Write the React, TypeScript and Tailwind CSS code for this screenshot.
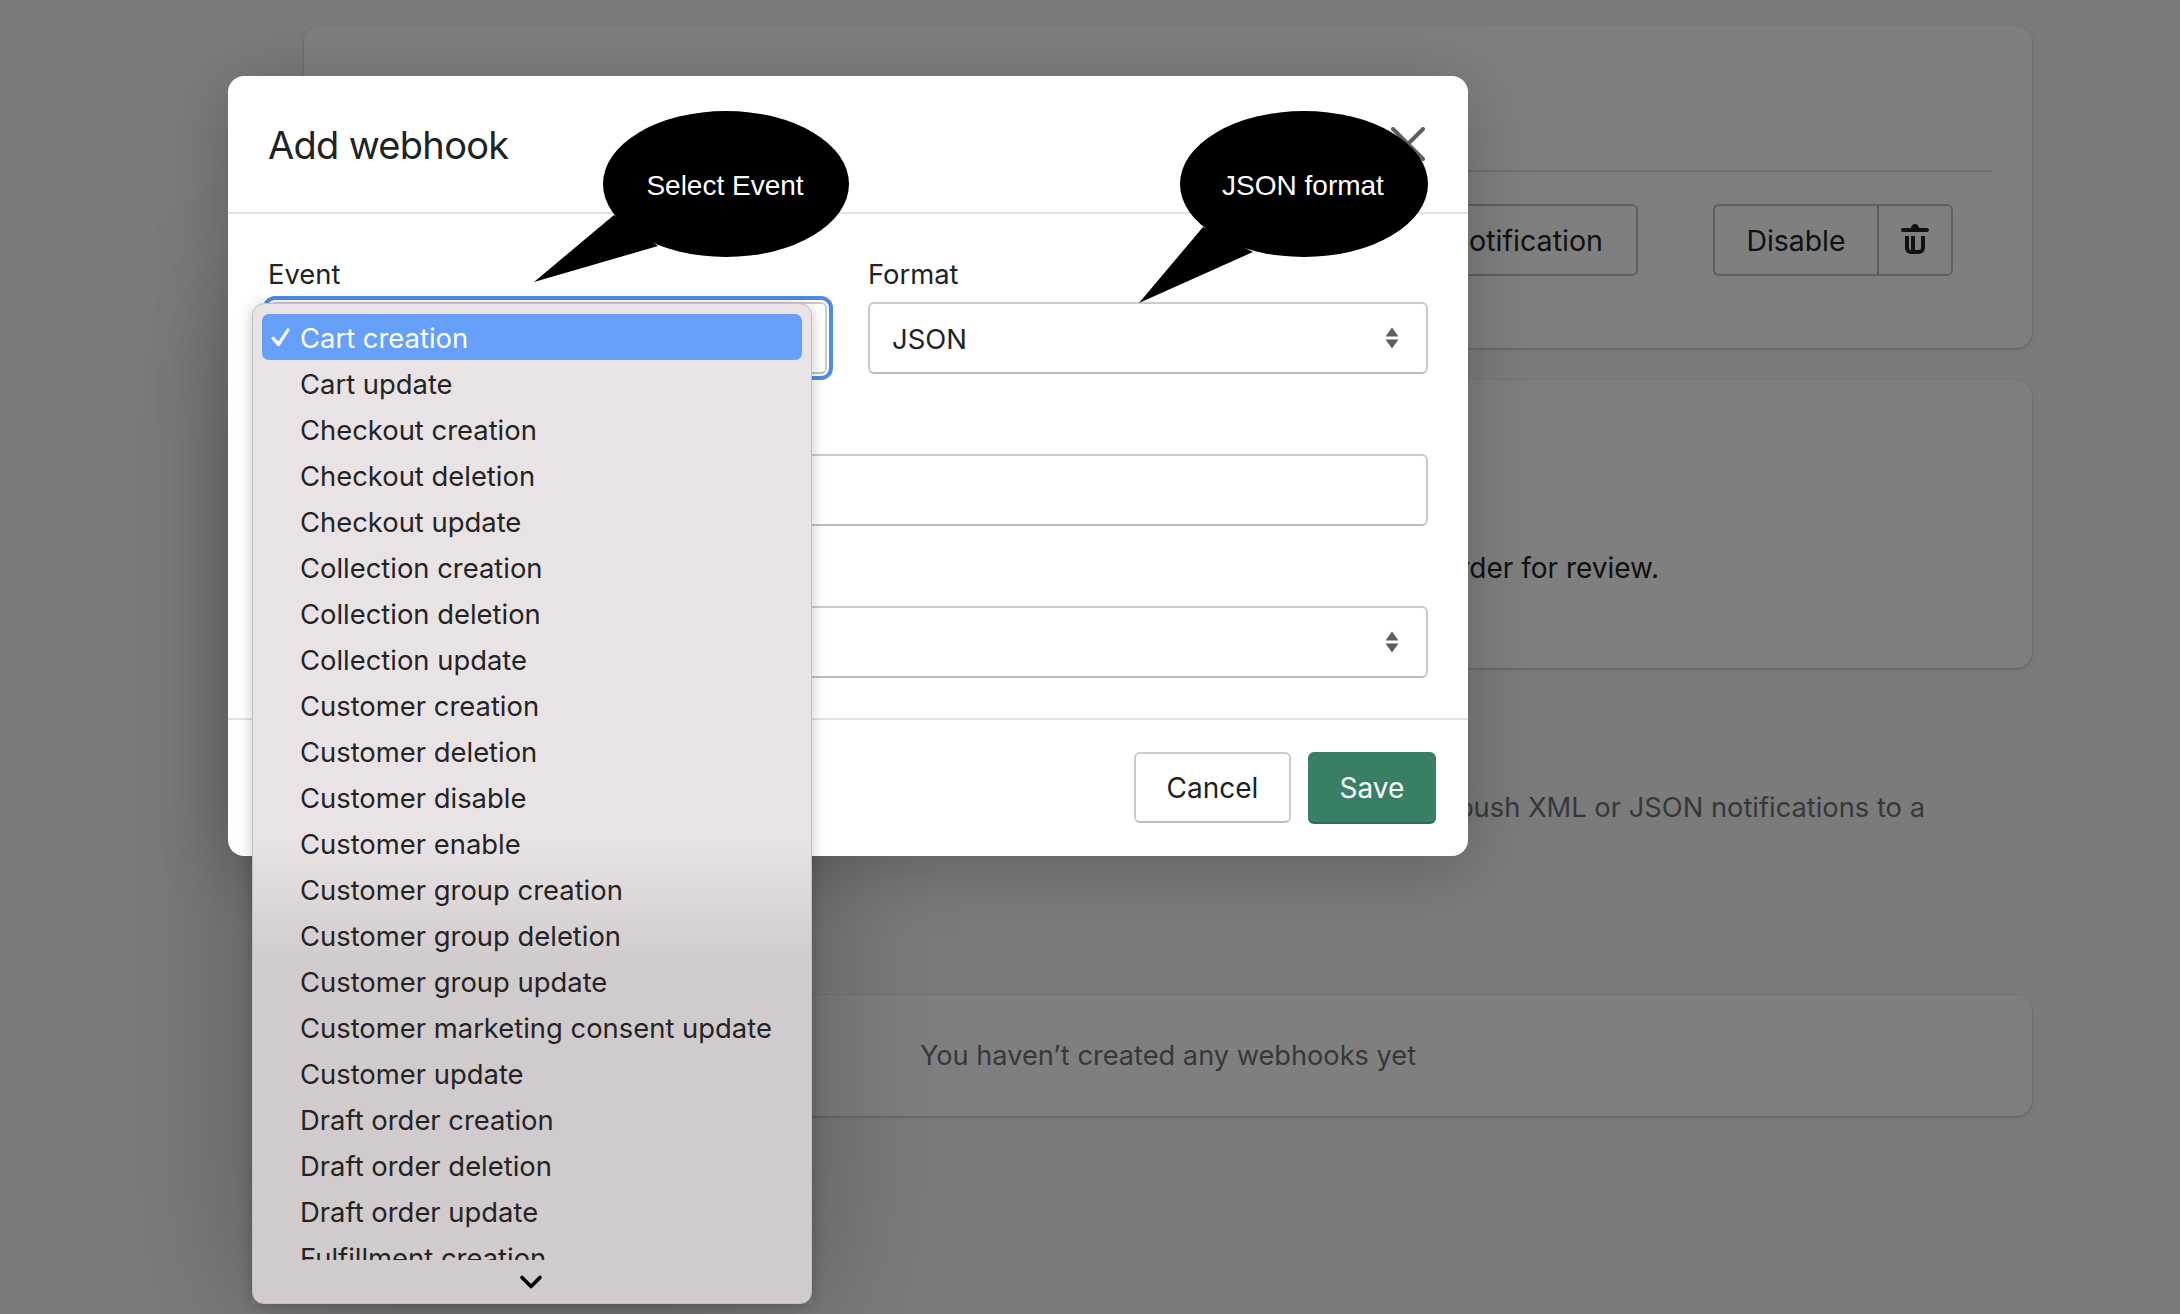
import { ChevronDown } from "lucide-react";

const events = [
  "Cart update",
  "Checkout creation",
  "Checkout deletion",
  "Checkout update",
  "Collection creation",
  "Collection deletion",
  "Collection update",
  "Customer creation",
  "Customer deletion",
  "Customer disable",
  "Customer enable",
  "Customer group creation",
  "Customer group deletion",
  "Customer group update",
  "Customer marketing consent update",
  "Customer update",
  "Draft order creation",
  "Draft order deletion",
  "Draft order update",
  "Fulfillment creation",
];

const fieldClass =
  "flex h-[72px] items-center justify-between rounded-[6px] border-2 border-[#c9cccf] border-b-[#babfc3] bg-white pl-[22px] pr-[27px] pt-[3px] text-[27.4px] text-[#202223]";

function UpDownCaret() {
  return (
    <svg width="14" height="22" viewBox="0 0 14 22" fill="#5c5f62" className="-mt-[3px]">
      <path d="M7 0.5 13.5 9.5H0.5Z" />
      <path d="M7 21.5 0.5 12.5H13.5Z" />
    </svg>
  );
}

function Label({ children }: { children: string }) {
  return (
    <p className="mb-[12px] h-[32px] text-[27.4px] leading-[32px] text-[#202223]">{children}</p>
  );
}

function Callout({
  className,
  text,
  ellipse,
  tail,
  width,
  height,
  textLeft,
}: {
  className: string;
  text: string;
  ellipse: { cx: number; cy: number; rx: number; ry: number };
  tail: string;
  width: number;
  height: number;
  textLeft: string;
}) {
  return (
    <div className={className}>
      <svg width={width} height={height} viewBox={`0 0 ${width} ${height}`} fill="#000">
        <ellipse {...ellipse} />
        <polygon points={tail} />
      </svg>
      <span
        className={`absolute top-[57px] -translate-x-1/2 whitespace-nowrap text-[28px] leading-[36px] text-white [font-family:'Liberation_Sans',sans-serif] ${textLeft}`}
      >
        {text}
      </span>
    </div>
  );
}

export default function App() {
  return (
    <div className="relative h-[1314px] overflow-hidden bg-[#f6f6f7] [font-family:Inter,sans-serif]">
      {/* page behind the modal */}
      <div className="ml-[304px] flex w-[1728px] flex-col pt-[26px]">
        <section className="h-[322px] rounded-[16px] bg-white px-[40px] pt-[144px] shadow-[0_1px_3px_rgba(0,0,0,0.25)]">
          <div className="border-t-2 border-[#e1e3e5]" />
          <div className="mt-[32px] flex justify-end gap-[75px] pr-[39px]">
            <div className="flex h-[72px] items-center rounded-[6px] border-2 border-[#babfc3] bg-white px-[33px] pt-[2px] text-[28.6px] text-[#202223]">
              Send test notification
            </div>
            <div className="flex h-[72px] rounded-[6px] border-2 border-[#babfc3] bg-white text-[28.4px] text-[#202223]">
              <div className="flex w-[164px] items-center justify-center border-r-2 border-[#babfc3] pt-[2px]">
                Disable
              </div>
              <div className="flex w-[72px] items-center justify-center">
                <svg width="40" height="40" viewBox="0 0 20 20" fill="#202223">
                  <path d="M8 3.994c0-1.101.895-1.994 2-1.994s2 .893 2 1.994h4c.552 0 1 .446 1 .997a1 1 0 0 1-1 .997h-12c-.552 0-1-.447-1-.997s.448-.997 1-.997h4zm-3 10.014v-6.01h2v6.01c0 .552.448 1 1 1v-7.01h2v7.01h2v-7.01h0v7.01c.552 0 1-.448 1-1v-6.01h2v6.01a3 3 0 0 1-3 3h-4a3 3 0 0 1-3-3z" />
                </svg>
              </div>
            </div>
          </div>
        </section>

        <section className="mt-[32px] flex h-[288px] justify-end rounded-[16px] bg-white pr-[373px] pt-[170px] shadow-[0_1px_3px_rgba(0,0,0,0.25)]">
          <p className="text-[28px] leading-[36px] text-[#202223]">order for review.</p>
        </section>

        <p className="mt-[122px] pr-[107px] text-right text-[27.3px] leading-[36px] text-[#6d7175]">
          push XML or JSON notifications to a
        </p>

        <section className="mt-[169px] flex h-[121px] items-center justify-center rounded-[16px] bg-white pt-[2px] shadow-[0_1px_3px_rgba(0,0,0,0.25)]">
          <p className="text-[27.2px] text-[#6d7175]">You haven’t created any webhooks yet</p>
        </section>
      </div>

      {/* backdrop */}
      <div className="absolute inset-0 bg-black/50" />
      <div className="absolute left-[252px] top-[303px] h-[1001px] w-[560px] shadow-[0_0_130px_rgba(0,0,0,0.28)]" />

      {/* modal */}
      <div className="absolute left-[228px] top-[76px] flex h-[780px] w-[1240px] flex-col rounded-[16px] bg-white shadow-[0_10px_70px_rgba(0,0,0,0.22)]">
        <header className="flex h-[138px] items-center justify-between border-b-2 border-[#e1e3e5] pl-[40px] pr-[43px]">
          <h2 className="mt-[3px] text-[38px] font-normal tracking-[-0.7px] text-[#202223]">Add webhook</h2>
          <svg width="34" height="34" viewBox="0 0 34 34" stroke="#5c5f62" strokeWidth="4" strokeLinecap="round">
            <path d="M2 2 32 32M32 2 2 32" />
          </svg>
        </header>

        <div className="flex h-[504px] flex-col pl-[41px] pr-[40px] pt-[44px]">
          <div className="grid grid-cols-[560px_1fr] gap-[39px]">
            <div>
              <div className="-ml-[1px]">
                <Label>Event</Label>
              </div>
              <div className={`${fieldClass} mr-[2px] outline-[4px] outline-offset-[2px] outline-[#4f8ae8]`} />
            </div>
            <div>
              <Label>Format</Label>
              <div className={fieldClass}>
                JSON
                <UpDownCaret />
              </div>
            </div>
          </div>
          <div className={`${fieldClass} mt-[80px]`} />
          <div className={`${fieldClass} mt-[80px]`}>
            <span />
            <UpDownCaret />
          </div>
        </div>

        <footer className="flex flex-1 items-start justify-end gap-[17px] border-t-2 border-[#e1e3e5] pr-[32px] pt-[32px]">
          <button className="flex h-[71px] w-[157px] items-center justify-center rounded-[6px] border-2 border-[#c9cccf] border-b-[#babfc3] bg-white pt-[1px] text-[28px] text-[#202223]">
            Cancel
          </button>
          <button className="flex h-[72px] w-[128px] items-center justify-center rounded-[6px] border-b-2 border-[#2f6b55] bg-[#387f63] pt-[1px] text-[28px] text-white">
            Save
          </button>
        </footer>
      </div>

      <Callout
        className="absolute left-[530px] top-[111px]"
        text="Select Event"
        ellipse={{ cx: 196, cy: 73, rx: 123, ry: 73 }}
        tail="4,171 84,104 128,135"
        width={320}
        height={172}
        textLeft="left-[195px]"
      />
      <Callout
        className="absolute left-[1135px] top-[111px]"
        text="JSON format"
        ellipse={{ cx: 169, cy: 73, rx: 124, ry: 73 }}
        tail="4,192 68,116 118,141"
        width={294}
        height={193}
        textLeft="left-[168px]"
      />

      {/* native select popup */}
      <div className="absolute left-[252px] top-[303px] flex h-[1001px] w-[560px] flex-col rounded-[12px] border border-[#c4c0c2] bg-[linear-gradient(#e9e3e6_535px,#d1cbce_660px)] px-[9px] pt-[10px] shadow-[0_2px_14px_rgba(0,0,0,0.22)]">
        <div className="h-[946px] overflow-hidden text-[27.4px] leading-[49px] text-[#242424]">
          <div className="flex h-[46px] items-center rounded-[7px] bg-[#66a0fa] pl-[9px] pt-[3px] text-white">
            <svg width="19" height="18" viewBox="0 0 19 18" fill="#fff" className="mr-[10px] -mt-[3px]">
              <path d="M0 10 2.5 8.5 7.5 13.5 16.5 0 19 1.5 8.5 18 6.5 18Z" />
            </svg>
            Cart creation
          </div>
          {events.map((event) => (
            <div key={event} className="h-[46px] whitespace-nowrap pl-[38px]">
              {event}
            </div>
          ))}
        </div>
        <div className="flex flex-1 items-center justify-center pr-[2px]">
          <ChevronDown size={36} strokeWidth={2.4} color="#000" />
        </div>
      </div>
    </div>
  );
}
